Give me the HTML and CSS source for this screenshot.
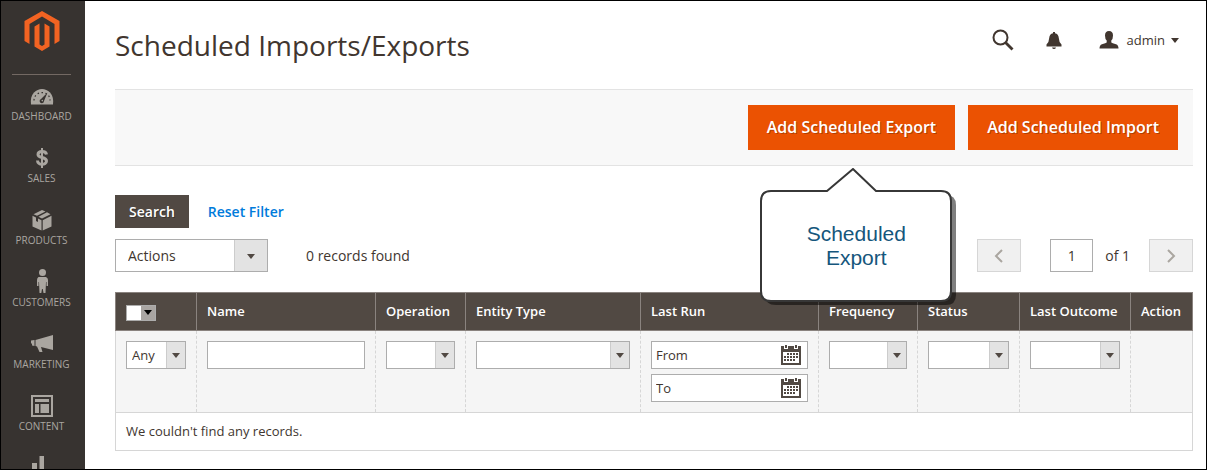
FILE: index.html
```html
<!DOCTYPE html>
<html lang="en">
<head>
<meta charset="utf-8">
<title>Scheduled Imports/Exports</title>
<link rel="stylesheet" href="styles.css">
</head>
<body>
<div class="app">
  <nav class="menu" aria-label="Main">
    <a class="logo" href="#" aria-label="Home">
      <svg width="36" height="40" viewBox="0 0 36 40" fill="#f26322"><path d="M18 0 35.500 10V30L30.500 33V13L18 5.500 5.500 13V33L.5 30V10Z"/><path d="M15.500 12.500V33.500L18 35 20.500 33.500V12.500L25.500 15.500V35.500L18 40 10.500 35.500V15.500Z"/></svg>
    </a>
    <ul class="menu-list">
      <li><a class="menu-item" href="#"><span class="menu-icon"><svg width="24" height="18" viewBox="0 0 24 18"><path fill="#aaa6a0" d="M1 17.500Q0 10 4 5.500 7.500 2 12 2T20 5.500Q24 10 23 17.500Z"/><path fill="none" stroke="#373330" stroke-width="1.200" stroke-dasharray="1.500 2.500" d="M4 13.500C4 3 20 3 20 13.500"/><path fill="#373330" d="M17.500 5.500 14 14A2.200 2.200 0 1 1 11 12Z"/><circle cx="12.300" cy="13.600" r=".8" fill="#aaa6a0"/></svg></span>Dashboard</a></li>
      <li><a class="menu-item" href="#"><span class="menu-icon"><svg width="24" height="22" viewBox="0 0 24 22" fill="none" stroke="#aaa6a0"><path stroke-width="3" d="M16.500 7.500C16 3.500 8 3.500 8 7.500 8 11.500 16.500 9.500 16.500 14 16.500 18.500 7.500 18.500 7.500 13.500"/><path stroke-width="2" d="M12 1V21"/></svg></span>Sales</a></li>
      <li><a class="menu-item" href="#"><span class="menu-icon"><svg width="24" height="22" viewBox="0 0 24 22" fill="#aaa6a0"><path d="M12 1 15.500 2.500 7 6.800 3.500 5.200ZM17 3.200 20.500 5.200 12 9.500 8.500 7.700ZM2.500 6.800 6 8.500V12L8 13V9.500L11.500 11.200V21.500L2.500 17.500ZM21.500 6.800V17.500L12.700 21.500V11.200Z"/></svg></span>Products</a></li>
      <li><a class="menu-item" href="#"><span class="menu-icon"><svg width="24" height="28" viewBox="0 0 24 28" fill="#aaa6a0"><circle cx="12.500" cy="4.500" r="3.500"/><path d="M8.500 9H16Q18 10 18 12V18H16.500V14H16L15.500 25H13.500L12.800 21H12L11.300 25H9.500L9 14H8.500V18H7V12Q7 10 8.500 9Z"/></svg></span>Customers</a></li>
      <li><a class="menu-item" href="#"><span class="menu-icon"><svg width="24" height="20" viewBox="0 0 24 20" fill="#aaa6a0"><path d="M23 1V16L11 13 12.500 18H9.500L7 12.500 5.500 12V6ZM1 6.500 4.500 6V12L2 11.500V9.500H1Z"/></svg></span>Marketing</a></li>
      <li><a class="menu-item" href="#"><span class="menu-icon"><svg width="24" height="22" viewBox="0 0 24 22"><path fill="none" stroke="#aaa6a0" stroke-width="2" d="M2 1H22V21H2Z"/><path fill="#aaa6a0" d="M5 4H19V7H5ZM5 9H9V18H5ZM10.500 9H19V18H10.500Z"/></svg></span>Content</a></li>
      <li><a class="menu-item" href="#" aria-label="Reports"><span class="menu-icon"><svg width="24" height="26" viewBox="0 0 24 26" fill="#aaa6a0"><path d="M2 8H7V24H2ZM9.500 1H14V24H9.500ZM16.500 14H21.500V24H16.500Z"/></svg></span></a></li>
    </ul>
  </nav>

  <main class="page">
    <header class="page-header">
      <h1 class="title">Scheduled Imports/Exports</h1>
      <div class="header-tools">
        <button class="tool" type="button" aria-label="Search"><svg width="22" height="22" viewBox="0 0 22 22" fill="none" stroke="#41362f"><circle cx="8.500" cy="8.500" r="7" stroke-width="2"/><path stroke-width="2.800" d="M13.500 13.500 20.500 20.500"/></svg></button>
        <button class="tool" type="button" aria-label="Notifications"><svg width="16" height="18" viewBox="0 0 16 18" fill="#41362f"><path d="M7 1H9V2.300Q12.500 3 12.800 7 13 11.500 15.500 13.500V15.500H.5V13.500Q3 11.500 3.200 7 3.500 3 7 2.300ZM6 16.500H10Q9.500 18 8 18T6 16.500Z"/></svg></button>
        <button class="tool account" type="button"><svg width="20" height="18" viewBox="0 0 20 18" fill="#41362f"><path d="M10 0Q14 0 14 4.500 14 8 12.300 9.500V11.500Q13 12.300 17 13.300 19.500 14 19.500 17.500H.5Q.5 14 3 13.300 7 12.300 7.700 11.500V9.500Q6 8 6 4.500 6 0 10 0Z"/></svg><span>admin</span><i class="caret"></i></button>
      </div>
    </header>

    <div class="page-actions">
      <div class="callout-anchor">
        <button class="primary" type="button">Add Scheduled Export</button>
        <div class="callout">
          <svg class="callout-shape" width="200" height="142" viewBox="0 0 200 142"><path fill="#000" fill-opacity=".5" d="M16 27H186Q196 27 196 37V127Q196 137 186 137H16Q5 137 5 127V37Q5 27 16 27Z"/><path fill="#fff" stroke="#373737" stroke-width="2" d="M11 23H67L93 1 116 23H181Q191 23 191 33V123Q191 133 181 133H11Q1 133 1 123V33Q1 23 11 23Z"/></svg>
          <p class="callout-text">Scheduled<br>Export</p>
        </div>
      </div>
      <button class="primary" type="button">Add Scheduled Import</button>
    </div>

    <div class="search-bar">
      <button class="secondary" type="button">Search</button>
      <button class="reset" type="button">Reset Filter</button>
    </div>

    <div class="toolbar">
      <span class="select select-actions"><select aria-label="Actions"><option>Actions</option></select></span>
      <span class="records">0 records found</span>
      <div class="pager">
        <button class="page-button" type="button" aria-label="Previous page" disabled><svg width="10" height="14" viewBox="0 0 10 14" fill="none" stroke="#aaa6a0" stroke-width="2"><path d="M8 1 2 7 8 13"/></svg></button>
        <input class="page-number" id="page-number" type="text" value="1">
        <label class="page-total" for="page-number">of 1</label>
        <button class="page-button" type="button" aria-label="Next page" disabled><svg width="10" height="14" viewBox="0 0 10 14" fill="none" stroke="#aaa6a0" stroke-width="2"><path d="M2 1 8 7 2 13"/></svg></button>
      </div>
    </div>

    <table class="grid">
      <colgroup><col class="c-check"><col><col class="c-operation"><col class="c-entity"><col class="c-run"><col class="c-frequency"><col class="c-status"><col class="c-outcome"><col class="c-action"></colgroup>
      <thead>
        <tr>
          <th><button class="mass" type="button" aria-label="Select records"><i class="mass-box"></i><i class="mass-arrow"></i></button></th>
          <th>Name</th><th>Operation</th><th>Entity Type</th><th>Last Run</th><th>Frequency</th><th>Status</th><th>Last Outcome</th><th>Action</th>
        </tr>
      </thead>
      <tbody>
        <tr class="filters">
          <td><span class="select"><select aria-label="Selection"><option>Any</option></select></span></td>
          <td><input class="field" type="text" aria-label="Name"></td>
          <td><span class="select"><select aria-label="Operation"><option></option></select></span></td>
          <td><span class="select"><select aria-label="Entity Type"><option></option></select></span></td>
          <td>
            <div class="dates">
              <div class="date"><input type="text" placeholder="From" aria-label="Last run from"><svg width="22" height="22" viewBox="0 0 22 22"><path fill="#514943" fill-rule="evenodd" d="M1 2H21V21H1ZM3 8V19H19V8Z"/><path fill="#fff" d="M4 1H8V5H4ZM14 1H18V5H14Z"/><path fill="#514943" d="M5 1H7V4H5ZM15 1H17V4H15Z"/><path fill="none" stroke="#514943" stroke-width="2" stroke-dasharray="2 1" d="M7 10H18M4 13H18M4 16H15"/></svg></div>
              <div class="date"><input type="text" placeholder="To" aria-label="Last run to"><svg width="22" height="22" viewBox="0 0 22 22"><path fill="#514943" fill-rule="evenodd" d="M1 2H21V21H1ZM3 8V19H19V8Z"/><path fill="#fff" d="M4 1H8V5H4ZM14 1H18V5H14Z"/><path fill="#514943" d="M5 1H7V4H5ZM15 1H17V4H15Z"/><path fill="none" stroke="#514943" stroke-width="2" stroke-dasharray="2 1" d="M7 10H18M4 13H18M4 16H15"/></svg></div>
            </div>
          </td>
          <td><span class="select"><select aria-label="Frequency"><option></option></select></span></td>
          <td><span class="select"><select aria-label="Status"><option></option></select></span></td>
          <td><span class="select"><select aria-label="Last Outcome"><option></option></select></span></td>
          <td></td>
        </tr>
        <tr class="empty"><td colspan="9">We couldn't find any records.</td></tr>
      </tbody>
    </table>
  </main>
</div>
</body>
</html>
```
FILE: styles.css
```css
* { box-sizing: border-box; }
body {
  margin: 0;
  font: 14px/20px "Open Sans", "Noto Sans", sans-serif;
  color: #41362f;
  background: #fff;
}
button, input, select { font: inherit; color: inherit; margin: 0; border-radius: 0; }
button { border: 0; padding: 0; background: none; cursor: pointer; }
svg { display: block; }

.app {
  display: flex;
  height: 100vh;
  overflow: hidden;
  border: 1px solid #000;
}

/* Side menu */
.menu { flex: none; width: 84px; background: #373330; }
.logo {
  display: flex;
  justify-content: center;
  height: 74px;
  margin: 0 14px 0 11px;
  padding: 10px 0 0 1px;
  border-bottom: 1px solid #736963;
}
.menu-list { list-style: none; margin: 0; padding: 7px 3px 0 0; }
.menu-item {
  display: block;
  height: 62px;
  text-align: center;
  text-decoration: none;
  text-transform: uppercase;
  font-size: 10px;
  line-height: 12px;
  color: #aaa6a0;
}
.menu-icon { display: flex; align-items: center; justify-content: center; height: 28px; }

/* Header */
.page { flex: 1; min-width: 0; padding: 0 13px 0 30px; }
.page-header { display: flex; justify-content: space-between; align-items: flex-start; height: 88px; }
.title { margin: 25px 0 0; font-size: 28px; line-height: 38px; font-weight: 400; }
.header-tools { display: flex; align-items: center; height: 40px; margin: 19px 14px 0 0; gap: 32px; }
.account { display: flex; align-items: center; gap: 8px; font-size: 13px; margin-left: 5px; }
.caret { border: 4px solid transparent; border-top: 5px solid #41362f; border-bottom: 0; margin-left: -2px; }

.page-actions {
  display: flex;
  justify-content: flex-end;
  gap: 13px;
  padding: 15px 15px;
  background: #f8f8f8;
  border: 1px solid #e3e3e3;
  border-width: 1px 0;
}
.primary {
  padding: 11px 19px 12px;
  font-size: 16px;
  line-height: 22px;
  font-weight: 600;
  color: #fff;
  background: #eb5202;
  text-shadow: 1px 1px 0 rgba(0, 0, 0, .25);
}
.callout-anchor { position: relative; }
.callout { position: absolute; left: 12px; top: 63px; z-index: 2; width: 193px; }
.callout-text {
  position: absolute;
  inset: 54px 0 auto;
  margin: 0;
  text-align: center;
  font: 21px/24px "Liberation Sans", Arial, sans-serif;
  color: #15567c;
}

/* Search and toolbar */
.search-bar { display: flex; gap: 19px; margin-top: 29px; }
.secondary {
  height: 33px;
  padding: 0 14px;
  font-weight: 600;
  color: #fff;
  background: #514943;
  text-shadow: 1px 1px 0 rgba(0, 0, 0, .3);
}
.reset { font-weight: 600; color: #007bdb; }
.toolbar { display: flex; align-items: center; margin: 11px 0 20px; height: 33px; }
.records { margin-left: 38px; }
.pager { display: flex; align-items: center; margin-left: auto; }
.page-button {
  display: flex;
  align-items: center;
  justify-content: center;
  width: 44px;
  height: 33px;
  background: #f0f0f0;
  border: 1px solid #d6d6d6;
}
.page-number { width: 43px; height: 33px; margin: 0 12px 0 29px; padding: 0; text-align: center; border: 1px solid #adadad; }
.page-total { margin-right: 19px; }

/* Form controls */
.select { display: block; position: relative; }
.select select {
  display: block;
  appearance: none;
  width: 100%;
  height: 28px;
  padding: 0 20px 0 5px;
  border: 1px solid #adadad;
  background: linear-gradient(to right, #cccccc 1px, #e3e3e3 1px) right / 19px 100% no-repeat #fff;
}
.select::after {
  content: "";
  position: absolute;
  right: 6px;
  top: 50%;
  margin-top: -2px;
  border: 4px solid transparent;
  border-top: 5px solid #514943;
  border-bottom: 0;
  pointer-events: none;
}
.select-actions { width: 153px; }
.select-actions select { height: 33px; padding-left: 12px; background-size: 33px 100%; }
.select-actions::after { right: 13px; }
.field { display: block; width: 100%; height: 28px; border: 1px solid #adadad; background: #fff; }
.dates { display: flex; flex-direction: column; gap: 5px; }
.date { display: flex; align-items: center; height: 28px; padding-right: 5px; border: 1px solid #adadad; background: #fff; }
.date input { flex: 1; min-width: 0; height: 26px; padding: 0 4px; border: 0; background: none; }
.date input::placeholder { color: #41362f; opacity: 1; }

/* Grid */
.grid { width: 100%; table-layout: fixed; border-collapse: collapse; font-size: 13px; line-height: 18px; }
.c-check { width: 81px; }
.c-operation { width: 90px; }
.c-entity { width: 175px; }
.c-run { width: 178px; }
.c-frequency { width: 99px; }
.c-status { width: 102px; }
.c-outcome { width: 111px; }
.c-action { width: 62px; }
.grid th {
  height: 38px;
  padding: 0 10px 2px;
  text-align: left;
  font-weight: 600;
  color: #fff;
  background: #514943;
  border: 1px solid #8a837f;
  white-space: nowrap;
}
.grid td { padding: 10px; border: 1px solid #d6d6d6; vertical-align: top; }
.filters td { background: #f5f5f5; border-left: 1px dashed #d6d6d6; border-right: 1px dashed #d6d6d6; }
.grid .filters td:first-child { border-left-style: solid; }
.grid .filters td:last-child { border-right-style: solid; }
.grid .empty td { padding: 9px 10px 10px; }
.mass { display: flex; width: 30px; height: 16px; border: 1px solid #adadad; margin-top: 4px; }
.mass-box { flex: 1; height: 14px; background: #fff; }
.mass-arrow { display: flex; align-items: center; justify-content: center; width: 14px; height: 14px; background: #a9a5a2; }
.mass-arrow::after { content: ""; border: 4px solid transparent; border-top: 5px solid #000; border-bottom: 0; }
```
